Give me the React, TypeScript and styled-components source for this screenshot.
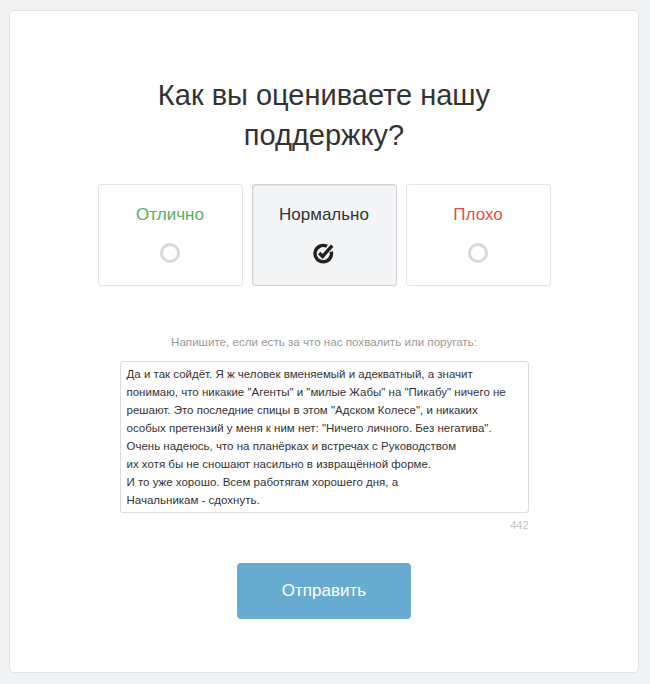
import React, { useState } from "react";
import styled, { createGlobalStyle } from "styled-components";

const Global = createGlobalStyle`
  html, body { margin: 0; padding: 0; background: #f2f3f5; }
  body { font-family: "Liberation Sans", Arial, sans-serif; color: #333; }
  * { box-sizing: border-box; }
`;

const Page = styled.div`
  padding: 10px 11px 11px 9px;
`;

const Card = styled.div`
  background: #fff;
  border: 1px solid #e2e4e7;
  border-radius: 5px;
  height: 663px;
  display: flex;
  flex-direction: column;
  align-items: center;
  padding-top: 64px;
`;

const Title = styled.h1`
  margin: 0;
  width: 380px;
  text-align: center;
  font-size: 29px;
  line-height: 40px;
  font-weight: 400;
  color: #333;
`;

const Options = styled.div`
  display: flex;
  gap: 9px;
  margin-top: 29px;
`;

const Option = styled.div<{ $active?: boolean }>`
  width: 145px;
  height: 102px;
  border: 1px solid ${(p) => (p.$active ? "#cfd1d4" : "#e4e5e7")};
  border-radius: 3px;
  background: ${(p) => (p.$active ? "#f4f5f7" : "#fff")};
  box-shadow: ${(p) => (p.$active ? "inset 1px 1px 0 #e6e7ea" : "none")};
  display: flex;
  flex-direction: column;
  align-items: center;
  padding-top: 20px;
  cursor: pointer;
`;

const OptionLabel = styled.div<{ $color: string }>`
  font-size: 17px;
  line-height: 20px;
  color: ${(p) => p.$color};
`;

const IconSlot = styled.div`
  margin-top: 16px;
  width: 24px;
  height: 24px;
  display: flex;
  align-items: center;
  justify-content: center;
`;

const Radio = styled.div`
  width: 20px;
  height: 20px;
  border-radius: 50%;
  border: 3px solid #d8d8d8;
`;

const Hint = styled.div`
  margin-top: 48px;
  font-size: 11.6px;
  line-height: 16px;
  color: #999;
`;

const Field = styled.div`
  margin-top: 11px;
  width: 409px;
  display: flex;
  flex-direction: column;
`;

const TextArea = styled.textarea`
  width: 409px;
  height: 152px;
  border: 1px solid #dcdcdc;
  border-radius: 3px;
  padding: 3px 6px;
  font-family: "Liberation Sans", Arial, sans-serif;
  font-size: 11.5px;
  line-height: 18px;
  color: #333;
  resize: none;
  outline: none;
  overflow: hidden;
`;

const Counter = styled.div`
  align-self: flex-end;
  margin-top: 6px;
  font-size: 11px;
  line-height: 13px;
  color: #c4c4c4;
`;

const Submit = styled.button`
  margin-top: 31px;
  width: 174px;
  height: 56px;
  border: none;
  border-radius: 4px;
  background: #67acd0;
  color: #fff;
  font-family: "Liberation Sans", Arial, sans-serif;
  font-size: 17px;
  cursor: pointer;
`;

const CheckIcon = () => (
  <svg width="24" height="24" viewBox="0 0 24 24">
    <path
      d="M19.2 10.6 A8.2 8.2 0 1 1 15 5.3"
      fill="none"
      stroke="#222"
      strokeWidth="3.4"
      strokeLinecap="butt"
    />
    <path
      d="M7.2 12 L10.6 15.4 L20.2 4.6"
      fill="none"
      stroke="#222"
      strokeWidth="3.4"
      strokeLinecap="butt"
      strokeLinejoin="miter"
    />
  </svg>
);

const text = `Да и так сойдёт. Я ж человек вменяемый и адекватный, а значит
понимаю, что никакие "Агенты" и "милые Жабы" на "Пикабу" ничего не
решают. Это последние спицы в этом "Адском Колесе", и никаких
особых претензий у меня к ним нет: "Ничего личного. Без негатива".
Очень надеюсь, что на планёрках и встречах с Руководством
их хотя бы не сношают насильно в извращённой форме.
И то уже хорошо. Всем работягам хорошего дня, а
Начальникам - сдохнуть.`;

const options = [
  { label: "Отлично", color: "#5aad62" },
  { label: "Нормально", color: "#333" },
  { label: "Плохо", color: "#de4f4c" },
];

export default function App() {
  const [sel, setSel] = useState(1);
  const [value, setValue] = useState(text);
  return (
    <>
      <Global />
      <Page>
        <Card>
          <Title>Как вы оцениваете нашу поддержку?</Title>
          <Options>
            {options.map((o, i) => (
              <Option key={o.label} $active={sel === i} onClick={() => setSel(i)}>
                <OptionLabel $color={o.color}>{o.label}</OptionLabel>
                <IconSlot>{sel === i ? <CheckIcon /> : <Radio />}</IconSlot>
              </Option>
            ))}
          </Options>
          <Hint>Напишите, если есть за что нас похвалить или поругать:</Hint>
          <Field>
            <TextArea value={value} onChange={(e) => setValue(e.target.value)} />
            <Counter>442</Counter>
          </Field>
          <Submit>Отправить</Submit>
        </Card>
      </Page>
    </>
  );
}
